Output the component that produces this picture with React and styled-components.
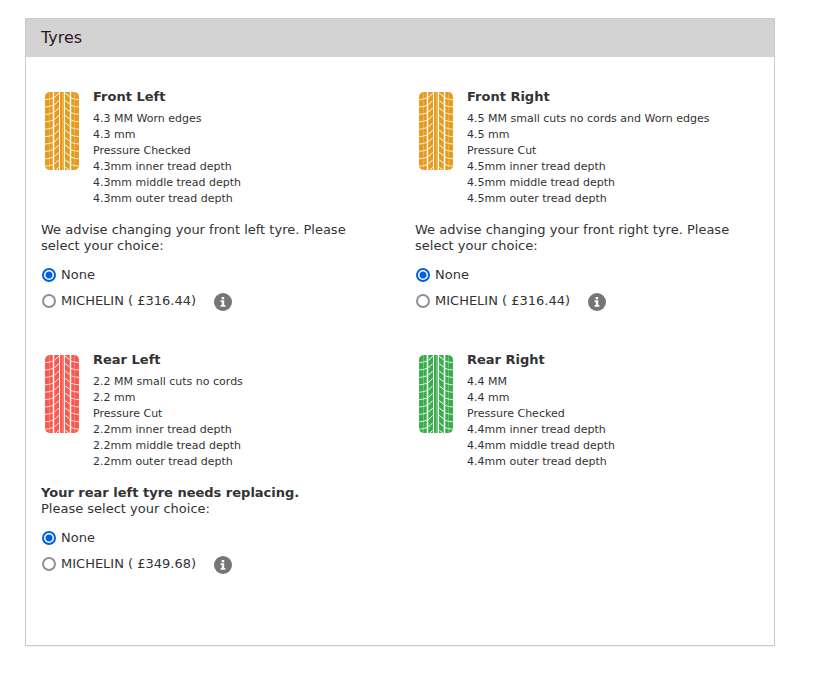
import React from 'react';
import styled, { createGlobalStyle } from 'styled-components';

const tyres = [
  {
    id: 'front-left',
    name: 'Front Left',
    colour: '#e69b1e',
    light: '#edb04c',
    notes: [
      '4.3 MM Worn edges',
      '4.3 mm',
      'Pressure Checked',
      '4.3mm inner tread depth',
      '4.3mm middle tread depth',
      '4.3mm outer tread depth',
    ],
    advice: 'We advise changing your front left tyre. Please select your choice:',
    price: '£316.44',
  },
  {
    id: 'front-right',
    name: 'Front Right',
    colour: '#e69b1e',
    light: '#edb04c',
    notes: [
      '4.5 MM small cuts no cords and Worn edges',
      '4.5 mm',
      'Pressure Cut',
      '4.5mm inner tread depth',
      '4.5mm middle tread depth',
      '4.5mm outer tread depth',
    ],
    advice: 'We advise changing your front right tyre. Please select your choice:',
    price: '£316.44',
  },
  {
    id: 'rear-left',
    name: 'Rear Left',
    colour: '#fd5850',
    light: '#fe7a72',
    notes: [
      '2.2 MM small cuts no cords',
      '2.2 mm',
      'Pressure Cut',
      '2.2mm inner tread depth',
      '2.2mm middle tread depth',
      '2.2mm outer tread depth',
    ],
    warning: 'Your rear left tyre needs replacing.',
    advice: 'Please select your choice:',
    price: '£349.68',
  },
  {
    id: 'rear-right',
    name: 'Rear Right',
    colour: '#3aae4c',
    light: '#6cc47a',
    notes: [
      '4.4 MM',
      '4.4 mm',
      'Pressure Checked',
      '4.4mm inner tread depth',
      '4.4mm middle tread depth',
      '4.4mm outer tread depth',
    ],
  },
];

const blocks = [0, 1, 2, 3, 4, 5, 6, 7, 8, 9, 10];

const TyreIcon = ({ id, colour, light }) => (
  <Tread viewBox="0 0 34 78" aria-hidden="true">
    <clipPath id={`tread-${id}`}>
      <path d="M4 0h26q4 1 4 5v68q0 4-4 5H4q-4-1-4-5V5q0-4 4-5z" />
    </clipPath>
    <g clipPath={`url(#tread-${id})`}>
      <path fill={colour} d="M0 0h8v78H0zM9 0h5v78H9zM15 0h4v78h-4zM20 0h5v78h-5zM26 0h8v78h-8z" />
      <path
        fill={light}
        d="M4 0h1v78H4zM7 0h1v78H7zM9 0h1v78H9zM17 0h2v78h-2zM24 0h1v78h-1zM26 0h1v78h-1zM29 0h1v78h-1z"
      />
      {blocks.map((n) => (
        <g key={n} transform={`translate(0 ${n * 7.4})`} fill="none" stroke="#fff">
          <path strokeWidth=".8" d="M0 7.6q4-.1 8-1.6M34 7.6q-4-.1-8-1.6" />
          <path strokeWidth="1" d="M9.3 5.6l4.4-4.4M20.3 1.2l4.4 3.6" />
        </g>
      ))}
    </g>
  </Tread>
);

const Tyre = ({ tyre }) => (
  <Cell>
    <Summary>
      <TyreIcon id={tyre.id} colour={tyre.colour} light={tyre.light} />
      <div>
        <Name>{tyre.name}</Name>
        <Notes>
          {tyre.notes.map((note) => (
            <li key={note}>{note}</li>
          ))}
        </Notes>
      </div>
    </Summary>
    {tyre.advice && (
      <>
        <Advice>
          {tyre.warning && <Warning>{tyre.warning}</Warning>}
          {tyre.advice}
        </Advice>
        <Options role="radiogroup" aria-label={tyre.name}>
          <Option>
            <Choice>
              <Radio name={tyre.id} defaultChecked />
              None
            </Choice>
          </Option>
          <Option>
            <Choice>
              <Radio name={tyre.id} />
              MICHELIN ( {tyre.price})
            </Choice>
            <Info type="button" aria-label="More information">
              <svg viewBox="0 0 18 18" width="18" height="18">
                <circle cx="9" cy="9" r="9" fill="#757575" />
                <path fill="#fff" d="M7.6 4h2.6v2.2H7.6zM6.6 7.3h3.6v4.8h1.2v1.7H6.6v-1.7h1.2V9H6.6z" />
              </svg>
            </Info>
          </Option>
        </Options>
      </>
    )}
  </Cell>
);

const App = () => {
  return (
    <>
      <GlobalStyle />
      <Panel>
        <Title>Tyres</Title>
        <Grid>
          {tyres.map((tyre) => (
            <Tyre key={tyre.id} tyre={tyre} />
          ))}
        </Grid>
      </Panel>
    </>
  );
};

export default App;

const GlobalStyle = createGlobalStyle`
  * {
    box-sizing: border-box;
  }

  body {
    margin: 0;
    background: #fff;
    color: #333;
    font-family: Verdana, 'DejaVu Sans', sans-serif;
    font-size: 13px;
    line-height: 16px;
  }
`;

const Panel = styled.section`
  margin: 18px 46px 32px 25px;
  border: 1px solid #ccc;
  box-shadow: 0 1px 1px rgba(0, 0, 0, 0.05);
`;

const Title = styled.h1`
  margin: 0;
  padding: 9px 15px;
  background-color: #d3d3d3;
  color: #32161f;
  font-size: 16px;
  font-weight: normal;
  line-height: 20px;
`;

const Grid = styled.div`
  display: grid;
  grid-template-columns: 1fr 1fr;
  padding: 32px 0 30px;
`;

const Cell = styled.div`
  padding: 0 15px 38px;
`;

const Summary = styled.div`
  display: flex;
  gap: 14px;
`;

const Tread = styled.svg`
  flex: none;
  width: 34px;
  height: 78px;
  margin: 3px 0 0 4px;
`;

const Name = styled.h2`
  margin: 0 0 6px;
  font-size: 13px;
  font-weight: bold;
  line-height: 16px;
`;

const Notes = styled.ul`
  margin: 0;
  padding: 0;
  list-style: none;
  font-size: 11px;
`;

const Advice = styled.p`
  margin: 15px 0 8px;
`;

const Warning = styled.strong`
  display: block;
`;

const Options = styled.div`
  display: flex;
  flex-direction: column;
`;

const Option = styled.div`
  display: flex;
  align-items: center;
  gap: 18px;
  height: 26px;
`;

const Choice = styled.label`
  display: flex;
  align-items: center;
  gap: 5px;
`;

const Radio = styled.input.attrs({ type: 'radio' })`
  appearance: none;
  width: 14px;
  height: 14px;
  margin: 0 0 0 1px;
  border: 2px solid #8f8f9d;
  border-radius: 50%;
  background: #fff;

  &:checked {
    border-color: #0060df;
    background: radial-gradient(circle, #0060df 3px, #fff 4px);
  }
`;

const Info = styled.button`
  display: flex;
  margin: 2px 0 0;
  padding: 0;
  border: 0;
  background: none;
  cursor: pointer;
`;
